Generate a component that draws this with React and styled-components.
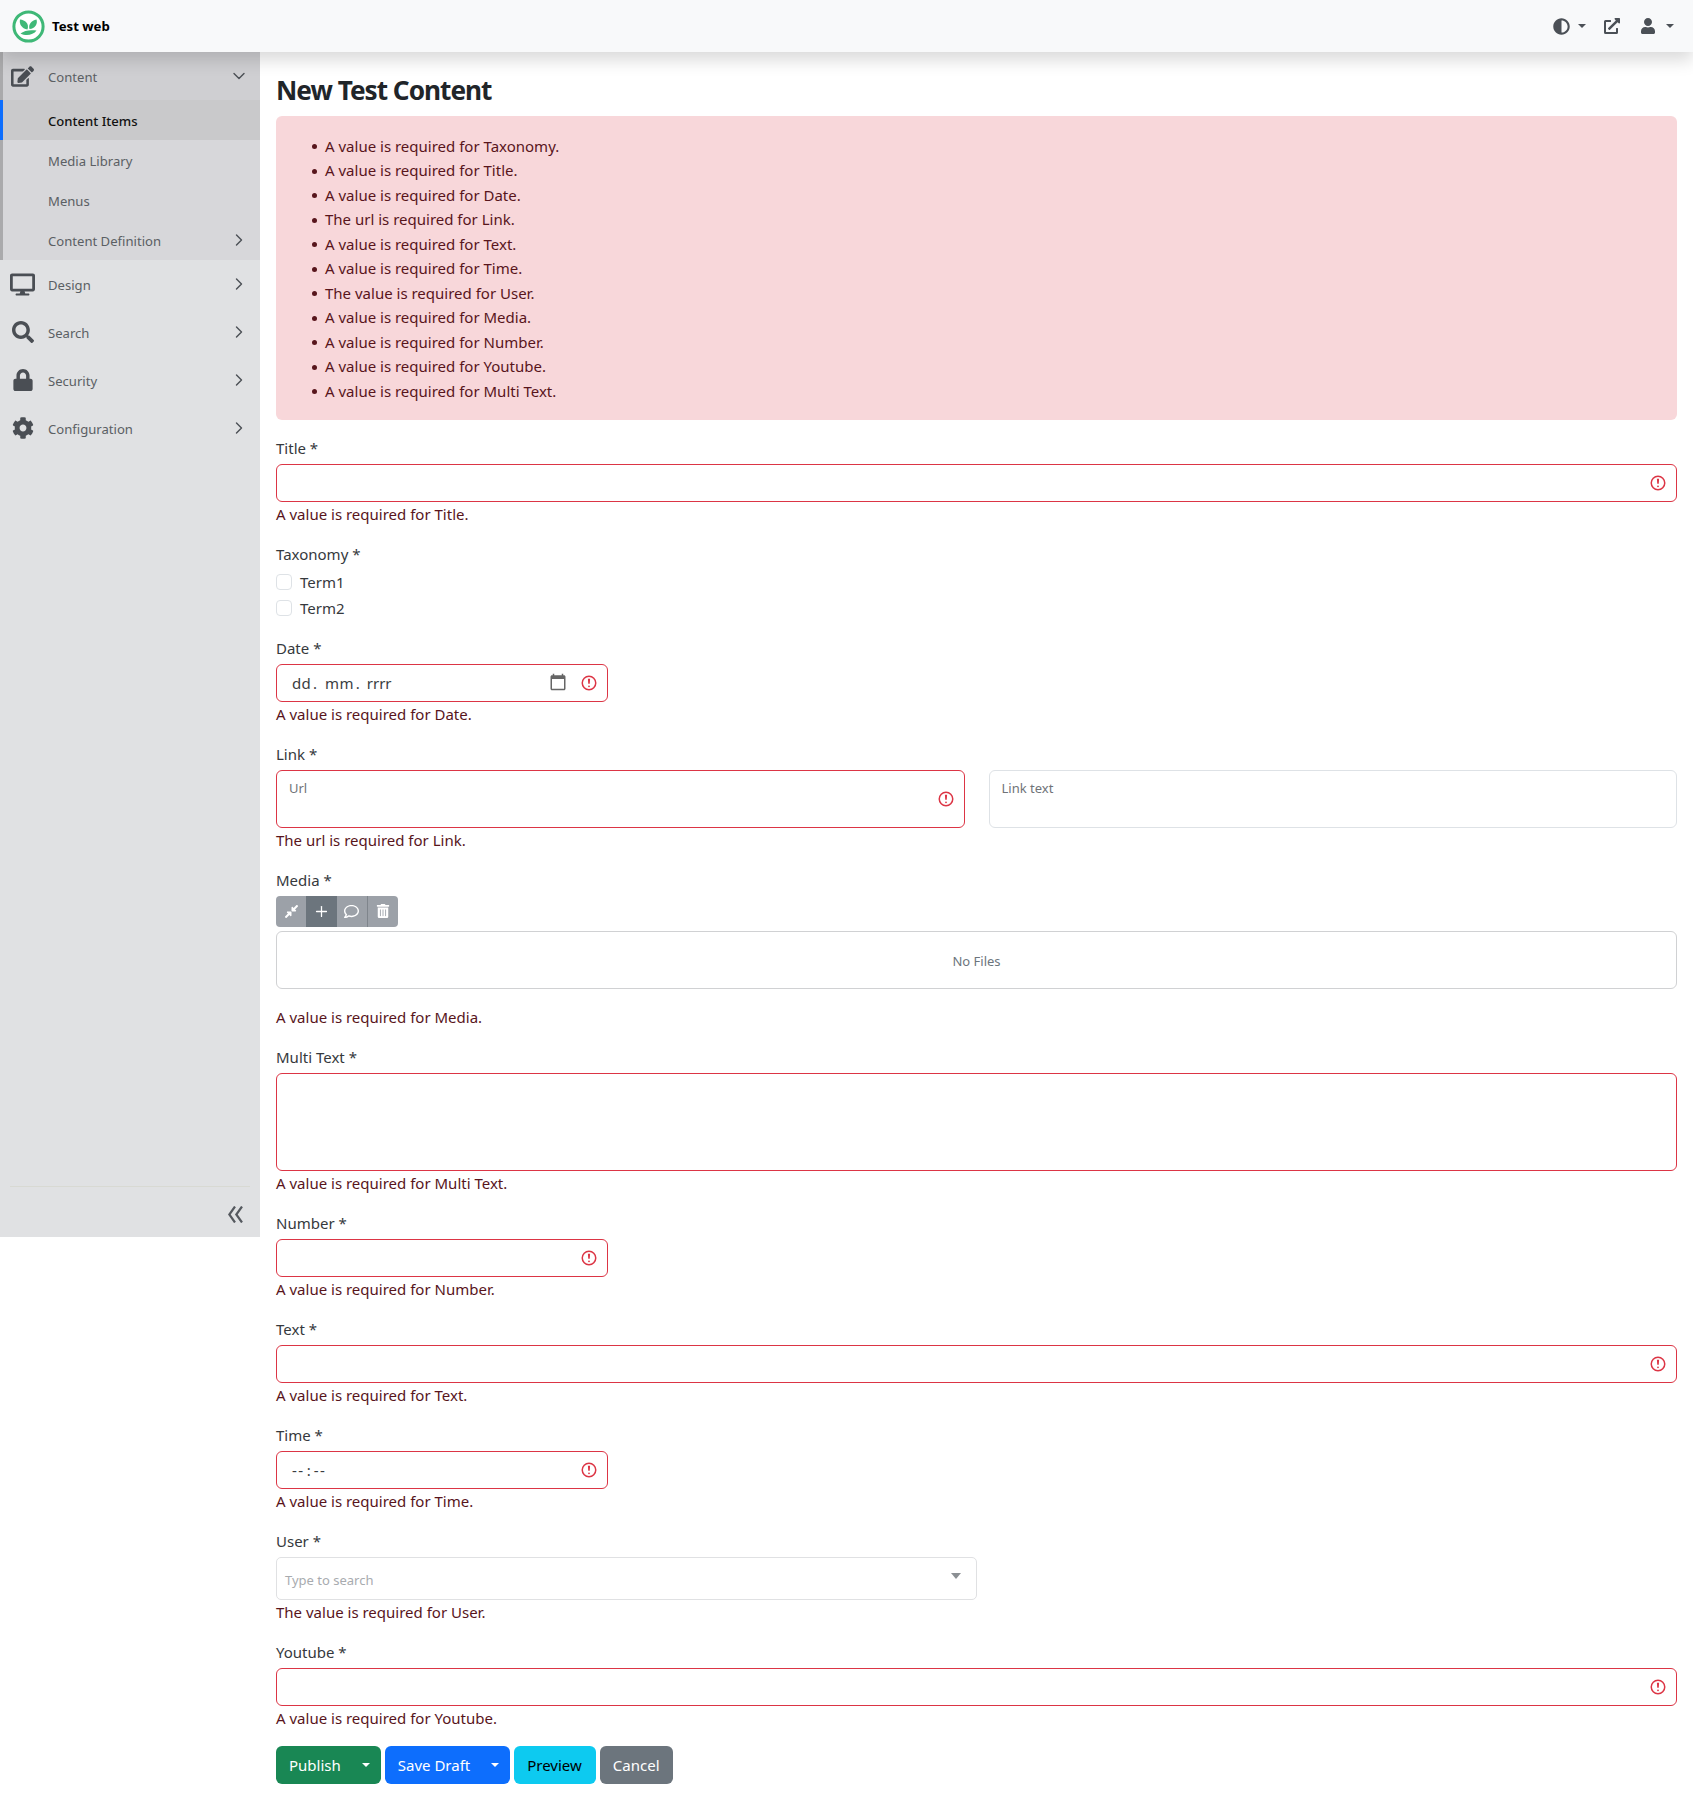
import React from "react";
import styled, { createGlobalStyle } from "styled-components";
import {
  FaEdit, FaDesktop, FaSearch, FaLock, FaCog,
  FaAdjust, FaExternalLinkAlt, FaUser, FaCompressAlt, FaRegComment, FaTrashAlt,
} from "react-icons/fa";
import { ChevronRight, ChevronDown, Plus } from "lucide-react";

const FONT = '"Noto Sans", "Open Sans", "Liberation Sans", sans-serif';

const Global = createGlobalStyle`
  * { box-sizing: border-box; }
  html, body { margin: 0; padding: 0; background: #fff; }
  body { font-family: ${FONT}; font-size: 15px; line-height: 24px; color: #212529; }
`;

const Page = styled.div`
  width: 1693px;
  min-height: 1820px;
`;

const Navbar = styled.header`
  position: relative;
  z-index: 2;
  height: 52px;
  background: #f8f9fa;
  box-shadow: 0 8px 16px rgba(0, 0, 0, 0.15);
  display: flex;
  align-items: center;
  justify-content: space-between;
  padding: 0 19px 0 12px;
`;

const Brand = styled.div`
  display: flex;
  align-items: center;
  gap: 7px;
  font-size: 13.2px;
  font-weight: 700;
  color: #000;
`;

const NavTools = styled.div`
  display: flex;
  align-items: center;
  color: #4b5056;
`;

const NavTool = styled.span`
  display: inline-flex;
  align-items: center;
  gap: ${(p) => p.$inner || 8}px;
  margin-left: ${(p) => p.$gap || 0}px;
  font-size: ${(p) => p.$size || 16}px;
`;

const Caret = styled.span`
  display: inline-block;
  width: 0;
  height: 0;
  border-top: 4px solid ${(p) => p.$color || "#4b5056"};
  border-left: 4px solid transparent;
  border-right: 4px solid transparent;
`;

const Layout = styled.div`
  display: flex;
  align-items: flex-start;
`;

const Sidebar = styled.aside`
  flex: none;
  width: 260px;
  height: 1185px;
  background: #e0e1e3;
  display: flex;
  flex-direction: column;
`;

const Menu = styled.nav`
  flex: 1;
`;

const Group = styled.div`
  background: #d7d7da;
  border-left: 3px solid #aaaaac;
`;

const TopItem = styled.div`
  height: 48px;
  display: flex;
  align-items: center;
  padding: 0 11px 0 ${(p) => (p.$open ? 7 : 10)}px;
  background: ${(p) => (p.$open ? "#cfcfd2" : "transparent")};
  color: #5b5f64;
  font-size: 13.1px;
`;

const TopIcon = styled.span`
  flex: none;
  width: 25px;
  margin-right: 13px;
  display: inline-flex;
  justify-content: center;
  color: #4a4e54;
  font-size: ${(p) => p.$size || 23}px;
`;

const ItemLabel = styled.span`
  flex: 1;
  padding-top: 2px;
`;

const SubItem = styled.div`
  height: 40px;
  display: flex;
  align-items: center;
  padding: 0 11px 0 45px;
  font-size: 13.1px;
  color: #5b5f64;
`;

const ActiveSubItem = styled(SubItem)`
  position: relative;
  background: #c9c9cb;
  color: #111;
  font-weight: 500;
  &::before {
    content: "";
    position: absolute;
    left: -3px;
    top: 0;
    bottom: 0;
    width: 3px;
    background: #0d6efd;
  }
`;

const Arrow = styled.span`
  display: inline-flex;
  color: #4d5157;
`;

const SideFooter = styled.div`
  height: 51px;
  margin: 0 10px;
  padding: 5px 7px 0 0;
  border-top: 1px solid #d8d9d3;
  display: flex;
  align-items: center;
  justify-content: flex-end;
`;

const Main = styled.main`
  flex: 1;
  min-width: 0;
  padding: 19px 16px 36px;
`;

const Title = styled.h1`
  margin: 0 0 6px;
  font-size: 26.2px;
  line-height: 39px;
  font-weight: 700;
  letter-spacing: -1px;
  color: #212529;
`;

const Alert = styled.div`
  background: #f8d7da;
  border-radius: 6px;
  padding: 18px 16px 17px;
  margin-bottom: 16px;
  color: #58151c;
`;

const AlertList = styled.ul`
  margin: 0;
  padding: 0 0 0 33px;
  list-style: none;
  & > li {
    line-height: 24.45px;
  }
  & > li::before {
    content: "";
    display: inline-block;
    width: 5px;
    height: 5px;
    border-radius: 50%;
    background: #58151c;
    margin: 0 8px 2px -13px;
    vertical-align: middle;
  }
`;

const Field = styled.div`
  margin-bottom: 16px;
`;

const Label = styled.div`
  height: 24px;
  margin-bottom: 4px;
  color: #36393d;
`;

const Control = styled.div`
  position: relative;
  width: ${(p) => p.$width || "100%"};
  flex: ${(p) => (p.$grow ? 1 : "none")};
`;

const TextInput = styled.input`
  display: block;
  width: 100%;
  height: 38px;
  padding: 0 38px 0 12px;
  border: 1px solid #dc3545;
  border-radius: 6px;
  font: inherit;
  background: #fff;
  outline: none;
`;

const FakeInput = styled.div`
  height: 38px;
  padding: 0 0 0 15px;
  border: 1px solid #dc3545;
  border-radius: 6px;
  display: flex;
  align-items: center;
  color: #3a3d41;
`;

const Segment = styled.span`
  letter-spacing: ${(p) => p.$track ?? 0.3}px;
`;

const Separator = styled.span`
  margin: 0 ${(p) => p.$after ?? 8}px 0 ${(p) => p.$before ?? 2}px;
`;

const TallArea = styled.div`
  height: 98px;
  border: 1px solid #dc3545;
  border-radius: 6px;
  background: #fff;
`;

const FloatBox = styled.div`
  height: 58px;
  padding: 7px 12px;
  border: 1px solid ${(p) => (p.$invalid ? "#dc3545" : "#dee2e6")};
  border-radius: 6px;
  font-size: 13px;
  line-height: 20px;
  color: #6f7378;
`;

const InvalidMark = styled.svg`
  position: absolute;
  right: ${(p) => p.$right || 10}px;
  top: 50%;
  width: 18px;
  height: 18px;
  margin-top: -9px;
`;

const CalendarMark = styled.svg`
  position: absolute;
  right: 41px;
  top: 50%;
  width: 18px;
  height: 18px;
  margin-top: -10px;
`;

const ErrorText = styled.div`
  min-height: 24px;
  color: #58151c;
`;

const TermRow = styled.label`
  display: flex;
  align-items: center;
  gap: 8px;
  height: 24px;
  margin-bottom: 2px;
  color: #36393d;
`;

const TermBox = styled.span`
  width: 16px;
  height: 16px;
  border: 1px solid #dee2e6;
  border-radius: 4px;
  background: #fff;
`;

const LinkRow = styled.div`
  display: flex;
  gap: 24px;
`;

const Toolbar = styled.div`
  display: flex;
  width: 122px;
  height: 31px;
  margin-bottom: 4px;
  border-radius: 4px;
  overflow: hidden;
  background: #9ca1a8;
`;

const ToolCell = styled.span`
  flex: 1;
  display: flex;
  align-items: center;
  justify-content: center;
  color: #fff;
  font-size: ${(p) => p.$size || 14}px;
  background: ${(p) => (p.$on ? "#6c757d" : "transparent")};
  border-left: ${(p) => (p.$split ? "1px solid #7f858c" : "0")};
`;

const DropZone = styled.div`
  height: 58px;
  border: 1px solid #d0d1d3;
  border-radius: 6px;
  display: flex;
  align-items: center;
  justify-content: center;
  padding-top: 2px;
  font-size: 13px;
  color: #6c757d;
  margin-bottom: 16px;
`;

const SelectBox = styled.div`
  position: relative;
  width: 701px;
  height: 43px;
  border: 1px solid #e0e1e3;
  border-radius: 5px;
  display: flex;
  align-items: center;
  padding: 3px 8px 0;
  font-size: 13px;
  color: #a8abaf;
`;

const SelectCaret = styled.span`
  position: absolute;
  right: 15px;
  top: 15px;
  width: 0;
  height: 0;
  border-top: 6px solid #8b8f93;
  border-left: 5.5px solid transparent;
  border-right: 5.5px solid transparent;
`;

const Actions = styled.div`
  display: flex;
  gap: 4px;
`;

const Btn = styled.span`
  height: 38px;
  display: inline-flex;
  align-items: center;
  gap: ${(p) => p.$gap || 0}px;
  padding: 0 ${(p) => p.$right || 13}px 0 13px;
  border-radius: 6px;
  background: ${(p) => p.$bg};
  color: ${(p) => p.$fg || "#fff"};
`;

const Invalid = ({ right }) => (
  <InvalidMark viewBox="0 0 12 12" $right={right}>
    <circle cx="6" cy="6" r="4.5" fill="none" stroke="#dc3545" />
    <path d="M5.8 3.6h.4L6 6.5z" fill="#dc3545" stroke="#dc3545" />
    <circle cx="6" cy="8.2" r=".6" fill="#dc3545" />
  </InvalidMark>
);

const Logo = () => (
  <svg width="33" height="33" viewBox="0 0 33 33">
    <circle cx="16.5" cy="16.5" r="14.6" fill="#fff" stroke="#3fb877" strokeWidth="3" />
    <path d="M15.5 19.500C9.500 18.500 7 14 8 9.500c5 .5 9.500 4 7.500 10z" fill="#3fb877" />
    <path d="M17.500 19c-1.500-4.500 2-8.500 7-9.500 1.500 4.500-1.500 9-7 9.500z" fill="#3fb877" />
    <path d="M8.500 23.500c3.500-3 9.500-4 16-3-3 4.500-10.500 6-16 3z" fill="#3fb877" />
  </svg>
);

const CollapseIcon = () => (
  <svg width="15" height="17" viewBox="0 0 15 17" fill="none" stroke="#55595f" strokeWidth="2.2">
    <path d="M7 .5 1.300 8.500 7 16.500M14 .5 8.300 8.500 14 16.500" />
  </svg>
);

const errors = [
  "A value is required for Taxonomy.", "A value is required for Title.", "A value is required for Date.",
  "The url is required for Link.", "A value is required for Text.", "A value is required for Time.",
  "The value is required for User.", "A value is required for Media.", "A value is required for Number.",
  "A value is required for Youtube.", "A value is required for Multi Text.",
];

const topItems = [
  ["Design", <FaDesktop />, 25],
  ["Search", <FaSearch />, 22],
  ["Security", <FaLock />, 22],
  ["Configuration", <FaCog />, 22],
];

const TextField = ({ label, error, width }) => (
  <Field>
    <Label>{label} *</Label>
    <Control $width={width}>
      <TextInput />
      <Invalid />
    </Control>
    <ErrorText>{error}</ErrorText>
  </Field>
);

export default function App() {
  return (
    <Page>
      <Global />
      <Navbar>
        <Brand><Logo />Test web</Brand>
        <NavTools>
          <NavTool $size={17}><FaAdjust /><Caret /></NavTool>
          <NavTool $gap={18}><FaExternalLinkAlt /></NavTool>
          <NavTool $gap={20} $inner={10}><FaUser /><Caret /></NavTool>
        </NavTools>
      </Navbar>
      <Layout>
        <Sidebar>
          <Menu>
            <Group>
              <TopItem $open>
                <TopIcon $size={23}><FaEdit /></TopIcon>
                <ItemLabel>Content</ItemLabel>
                <Arrow><ChevronDown size={20} strokeWidth={1.7} /></Arrow>
              </TopItem>
              <ActiveSubItem><ItemLabel>Content Items</ItemLabel></ActiveSubItem>
              <SubItem><ItemLabel>Media Library</ItemLabel></SubItem>
              <SubItem><ItemLabel>Menus</ItemLabel></SubItem>
              <SubItem><ItemLabel>Content Definition</ItemLabel><Arrow><ChevronRight size={20} strokeWidth={1.7} /></Arrow></SubItem>
            </Group>
            {topItems.map(([name, icon, size]) => (
              <TopItem key={name}>
                <TopIcon $size={size}>{icon}</TopIcon>
                <ItemLabel>{name}</ItemLabel>
                <Arrow><ChevronRight size={20} strokeWidth={1.7} /></Arrow>
              </TopItem>
            ))}
          </Menu>
          <SideFooter><CollapseIcon /></SideFooter>
        </Sidebar>
        <Main>
          <Title>New Test Content</Title>
          <Alert>
            <AlertList>
              {errors.map((e) => <li key={e}>{e}</li>)}
            </AlertList>
          </Alert>

          <TextField label="Title" error="A value is required for Title." />

          <Field>
            <Label>Taxonomy *</Label>
            <TermRow><TermBox />Term1</TermRow>
            <TermRow><TermBox />Term2</TermRow>
          </Field>

          <Field>
            <Label>Date *</Label>
            <Control $width="332px">
              <FakeInput>
                <Segment>dd</Segment><Separator>.</Separator>
                <Segment>mm</Segment><Separator $after={7}>.</Separator>
                <Segment $track={0}>rrrr</Segment>
              </FakeInput>
              <CalendarMark viewBox="0 0 24 24">
                <path fill="#666" d="M20 3h-1V1h-2v2H7V1H5v2H4c-1.100 0-2 .9-2 2v16c0 1.100.9 2 2 2h16c1.100 0 2-.9 2-2V5c0-1.100-.9-2-2-2zm0 18H4V8h16v13z" />
              </CalendarMark>
              <Invalid />
            </Control>
            <ErrorText>A value is required for Date.</ErrorText>
          </Field>

          <Field>
            <Label>Link *</Label>
            <LinkRow>
              <Control $grow>
                <FloatBox $invalid>Url</FloatBox>
                <Invalid />
              </Control>
              <Control $grow>
                <FloatBox>Link text</FloatBox>
              </Control>
            </LinkRow>
            <ErrorText>The url is required for Link.</ErrorText>
          </Field>

          <Field>
            <Label>Media *</Label>
            <Toolbar>
              <ToolCell $size={15}><FaCompressAlt /></ToolCell>
              <ToolCell $on><Plus size={17} strokeWidth={1.8} /></ToolCell>
              <ToolCell $size={15}><FaRegComment /></ToolCell>
              <ToolCell $split><FaTrashAlt /></ToolCell>
            </Toolbar>
            <DropZone>No Files</DropZone>
            <ErrorText>A value is required for Media.</ErrorText>
          </Field>

          <Field>
            <Label>Multi Text *</Label>
            <TallArea />
            <ErrorText>A value is required for Multi Text.</ErrorText>
          </Field>

          <TextField label="Number" error="A value is required for Number." width="332px" />
          <TextField label="Text" error="A value is required for Text." />

          <Field>
            <Label>Time *</Label>
            <Control $width="332px">
              <FakeInput>
                <Segment $track={1.5}>--</Segment><Separator $before={2} $after={3}>:</Separator>
                <Segment $track={1.5}>--</Segment>
              </FakeInput>
              <Invalid />
            </Control>
            <ErrorText>A value is required for Time.</ErrorText>
          </Field>

          <Field>
            <Label>User *</Label>
            <SelectBox>Type to search<SelectCaret /></SelectBox>
            <ErrorText>The value is required for User.</ErrorText>
          </Field>

          <TextField label="Youtube" error="A value is required for Youtube." />

          <Actions>
            <Btn $bg="#198754" $gap={21} $right={11}>Publish<Caret $color="#fff" /></Btn>
            <Btn $bg="#0d6efd" $gap={21} $right={11}>Save Draft<Caret $color="#fff" /></Btn>
            <Btn $bg="#0dcaf0" $fg="#000" $right={14}>Preview</Btn>
            <Btn $bg="#6c757d">Cancel</Btn>
          </Actions>
        </Main>
      </Layout>
    </Page>
  );
}
